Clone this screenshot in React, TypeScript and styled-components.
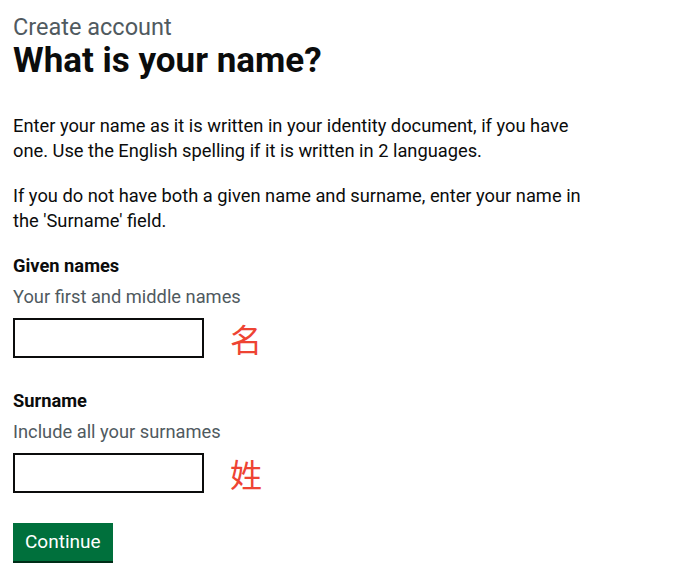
import styled, { createGlobalStyle } from 'styled-components';

const GlobalStyle = createGlobalStyle`
  body {
    margin: 0;
    background: #fff;
    color: #0b0c0c;
    font-family: Roboto, 'Noto Sans', Arial, sans-serif;
  }
`;

const Page = styled.main`
  padding: 13px 13px 20px;
  max-width: 580px;
`;

const Caption = styled.span`
  display: block;
  font-size: 23.5px;
  line-height: 28px;
  color: #505a5f;
`;

const Heading = styled.h1`
  margin: 0 0 32px;
  font-size: 35px;
  line-height: 40px;
  font-weight: 700;
`;

const Body = styled.p`
  margin: 0 0 20px;
  font-size: 18.3px;
  line-height: 25px;
`;

const FormGroup = styled.div<{ $first?: boolean }>`
  display: flex;
  flex-direction: column;
  margin-top: ${(p) => (p.$first ? '14px' : '0')};
  margin-bottom: 30px;
`;

const Label = styled.label`
  font-size: 18.3px;
  line-height: 25px;
  font-weight: 700;
  margin-bottom: 6px;
`;

const Hint = styled.div`
  font-size: 18.3px;
  line-height: 25px;
  color: #505a5f;
  margin-bottom: 9px;
`;

const InputRow = styled.div`
  display: flex;
  align-items: center;
  gap: 26px;
`;

const TextInput = styled.input`
  box-sizing: border-box;
  width: 191px;
  height: 40px;
  margin: 0;
  padding: 5px;
  border: 2px solid #0b0c0c;
  border-radius: 0;
  font: inherit;
  font-size: 19px;
`;

const Note = styled.span`
  font-family: 'Noto Sans CJK SC', 'Noto Sans CJK JP', sans-serif;
  font-size: 32px;
  line-height: 1;
  color: #ee4433;
`;

const Button = styled.button`
  align-self: flex-start;
  margin: 0;
  padding: 7px 12px 7px;
  border: 0;
  border-radius: 0;
  background: #00703c;
  box-shadow: 0 2px 0 #002d18;
  color: #fff;
  font-family: inherit;
  font-size: 19px;
  line-height: 24px;
  cursor: pointer;
`;

export default function App() {
  return (
    <>
      <GlobalStyle />
      <Page>
        <Caption>Create account</Caption>
        <Heading>What is your name?</Heading>
        <Body>
          Enter your name as it is written in your identity document, if you have one. Use the
          English spelling if it is written in 2 languages.
        </Body>
        <Body>
          If you do not have both a given name and surname, enter your name in the 'Surname'
          field.
        </Body>
        <FormGroup $first>
          <Label htmlFor="given-names">Given names</Label>
          <Hint>Your first and middle names</Hint>
          <InputRow>
            <TextInput id="given-names" type="text" />
            <Note>名</Note>
          </InputRow>
        </FormGroup>
        <FormGroup>
          <Label htmlFor="surname">Surname</Label>
          <Hint>Include all your surnames</Hint>
          <InputRow>
            <TextInput id="surname" type="text" />
            <Note>姓</Note>
          </InputRow>
        </FormGroup>
        <Button type="submit">Continue</Button>
      </Page>
    </>
  );
}
